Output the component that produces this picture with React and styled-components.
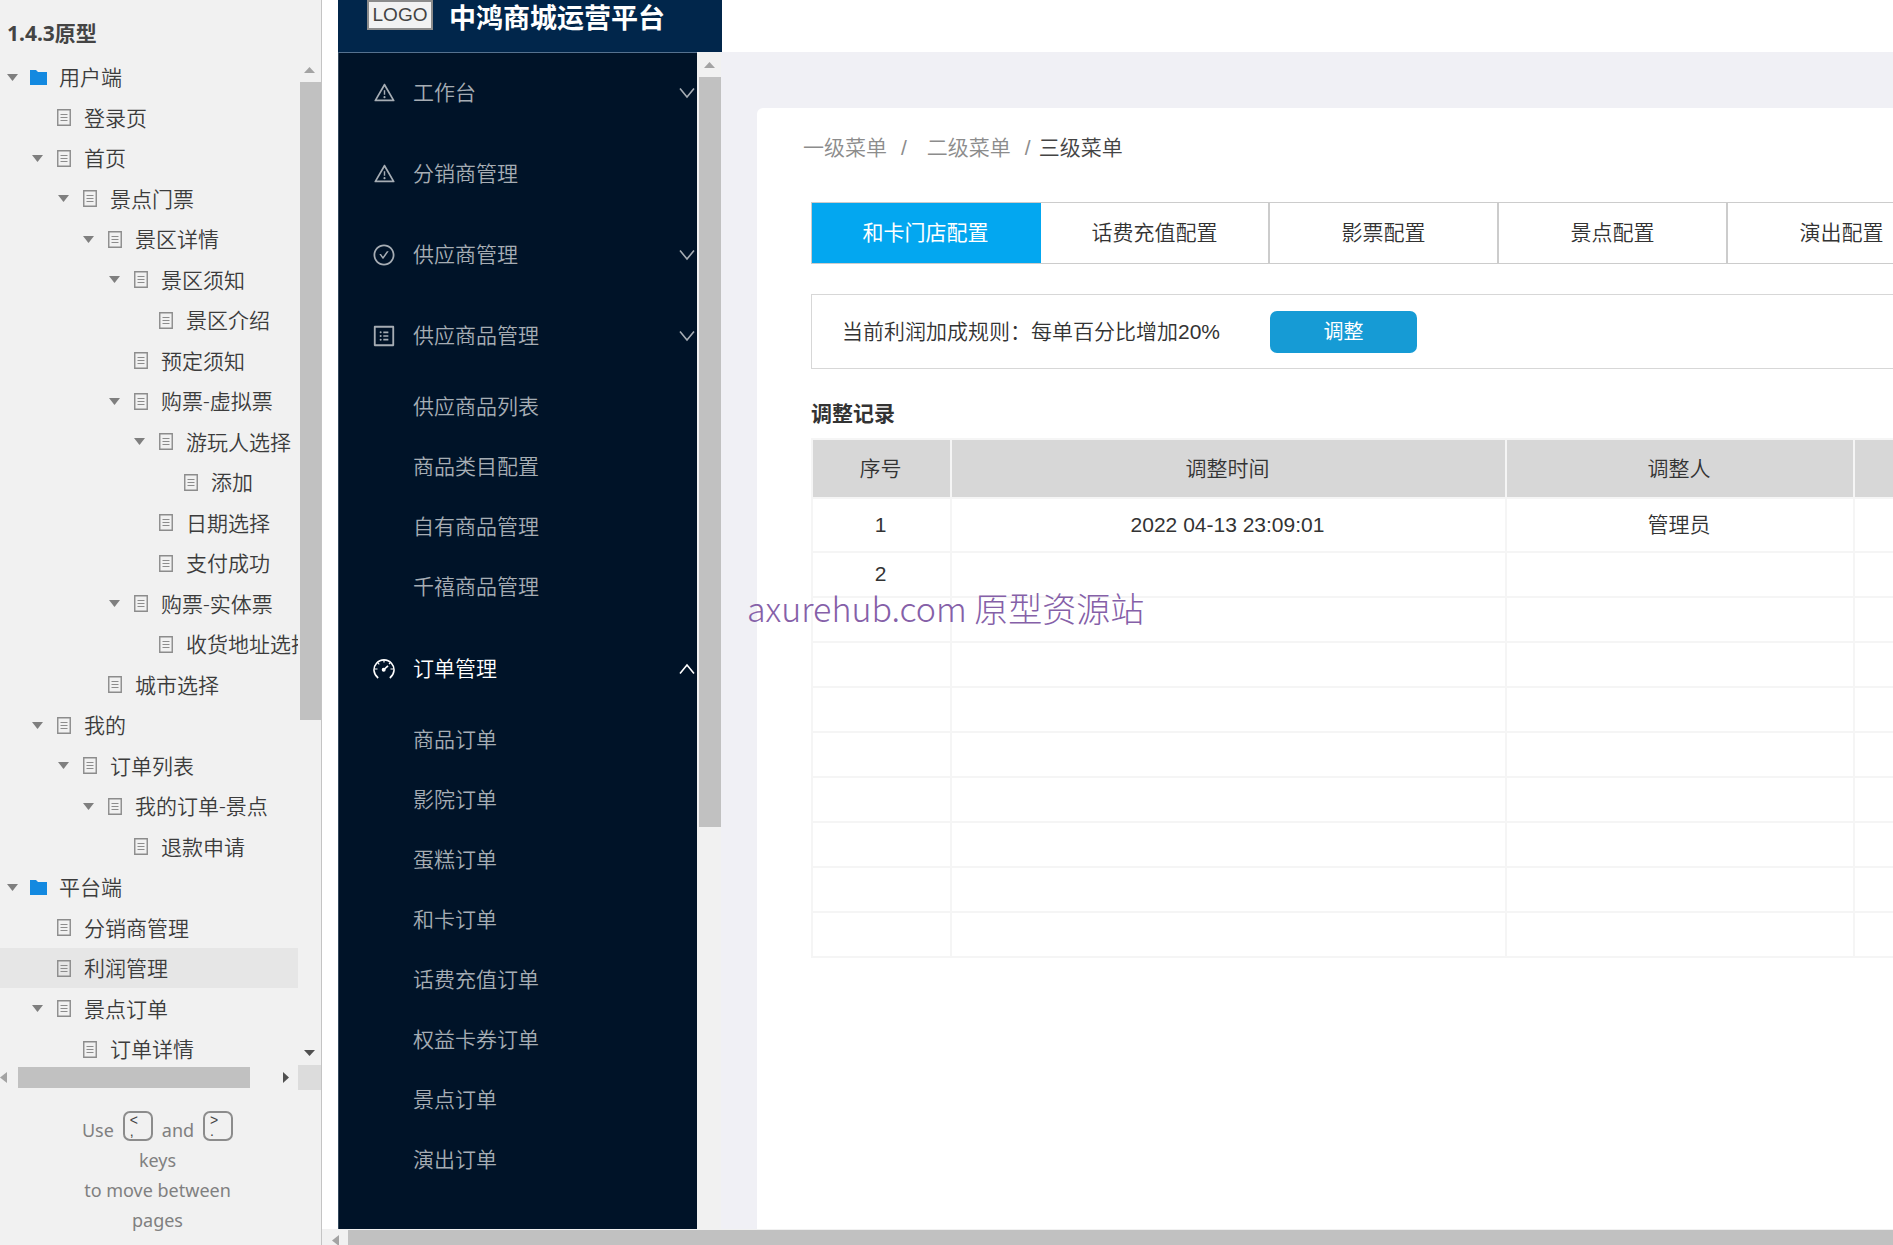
import React from "react";
import styled, { createGlobalStyle, css } from "styled-components";
import { AiOutlineWarning, AiOutlineCheckCircle, AiOutlineProfile } from "react-icons/ai";

const GlobalStyle = createGlobalStyle`
  *, *::before, *::after { box-sizing: border-box; }
  body {
    margin: 0;
    overflow: hidden;
    background: #fff;
    font-family: "Liberation Sans", "Noto Sans CJK SC", sans-serif;
    font-size: 21px;
    line-height: 30px;
    color: #333;
  }
  button { font: inherit; border: 0; padding: 0; cursor: pointer; background: none; color: inherit; }
  a { color: inherit; text-decoration: none; }
  h1, h2, p, ul { margin: 0; padding: 0; list-style: none; }
`;

const cjkLight = css`
  font-family: "Liberation Sans", "Noto Sans CJK SC", sans-serif;
  font-weight: 350;
`;

/* ---------- shell ---------- */

const Page = styled.div`
  display: flex;
  height: 100vh;
  overflow: hidden;
`;

const Sidebar = styled.aside`
  display: flex;
  flex-direction: column;
  flex: none;
  width: 322px;
  background: #f1f1f1;
  border-right: 1px solid #c4c4c4;
  font-family: "Noto Sans", "Noto Sans CJK SC", sans-serif;
`;

const ProjectTitle = styled.h1`
  flex: none;
  height: 57px;
  padding: 18px 7px 0;
  font-size: 21px;
  line-height: 30px;
  font-weight: 700;
  color: #444;
`;

const TreeArea = styled.div`
  display: grid;
  grid-template-columns: minmax(0, 1fr) 23px;
  grid-template-rows: minmax(0, 1fr) 25px;
  flex: 1;
  min-height: 0;
`;

const Tree = styled.ul`
  overflow: hidden;
`;

const TreeRow = styled.li`
  height: 40px;
  background: ${(p) => (p.$selected ? "#e6e6e6" : "transparent")};
  &:nth-child(even) { height: 41px; }
`;

const TreeLink = styled.a`
  display: flex;
  align-items: center;
  height: 100%;
  white-space: nowrap;
  font-weight: 350;
  color: #3c3c3c;
`;

const ArrowSlot = styled.span`
  display: flex;
  flex: none;
  width: 11px;
  margin-right: 12px;
`;

const IconSlot = styled.span`
  display: flex;
  flex: none;
  justify-content: center;
  width: 17px;
  margin-right: 12px;
`;

/* ---------- scroll bars ---------- */

const VTrack = styled.div`
  display: flex;
  flex-direction: column;
  align-items: center;
  flex: none;
  width: ${(p) => p.$width};
  background: #f1f1f1;
`;

const VThumb = styled.div`
  width: 100%;
  flex: 0 1 ${(p) => p.$size};
  background: #c1c1c1;
  border-left: 2px solid #f1f1f1;
`;

const VEnd = styled.div`
  display: flex;
  align-items: center;
  justify-content: center;
  flex: none;
  height: 25px;
  margin-top: ${(p) => (p.$last ? "auto" : "0")};
`;

const HTrack = styled.div`
  display: flex;
  align-items: center;
  background: #f1f1f1;
`;

const FrameScroll = styled(HTrack)`
  align-items: flex-start;
  flex: none;
  height: 16px;
  padding-top: 1px;
  overflow: hidden;
`;

const HEnd = styled.div`
  display: flex;
  align-items: center;
  justify-content: ${(p) => p.$align || "center"};
  flex: none;
  width: ${(p) => p.$width};
  height: 21px;
  margin-left: ${(p) => (p.$last ? "auto" : "0")};
`;

const HThumb = styled.div`
  flex: ${(p) => p.$flex};
  height: 21px;
  background: #c1c1c1;
`;

const Corner = styled.div`
  background: #dcdcdc;
`;

/* ---------- shortcuts hint ---------- */

const Hint = styled.footer`
  flex: none;
  height: 155px;
  padding: 21px 78px 0 72px;
  text-align: center;
  font-size: 18px;
  line-height: 30px;
  color: #808080;
`;

const HintLine = styled.p`
  display: flex;
  align-items: flex-end;
  justify-content: center;
  gap: 9px;
  height: 34px;
  white-space: nowrap;
`;

const Key = styled.kbd`
  display: flex;
  flex-direction: column;
  width: 30px;
  height: 30px;
  margin-bottom: 4px;
  padding-left: 5px;
  border: 2px solid #8c8c8c;
  border-radius: 7px;
  font-family: "Liberation Sans", sans-serif;
  font-size: 14px;
  line-height: 15px;
  text-align: left;
  color: #444;

  span:last-child { line-height: 7px; }
`;

/* ---------- preview frame ---------- */

const Frame = styled.div`
  display: flex;
  flex-direction: column;
  flex: 1;
  min-width: 0;
`;

const TopBar = styled.header`
  flex: none;
  padding-left: 16px;
`;

const Brand = styled.div`
  display: flex;
  align-items: flex-start;
  width: 384px;
  height: 52px;
  padding-left: 29px;
  gap: 16px;
  background: #01264b;
`;

const Logo = styled.div`
  width: 66px;
  height: 30px;
  border: 2px solid #8b8b8b;
  background: #f2f2f2;
  text-align: center;
  font-size: 19px;
  line-height: 25px;
  color: #444;
`;

const BrandName = styled.h2`
  font-size: 27px;
  line-height: 38px;
  font-weight: 700;
  color: #fff;
`;

const Body = styled.div`
  display: flex;
  flex: 1;
  min-height: 0;
  padding-left: 16px;
`;

const Menu = styled.nav`
  flex: none;
  width: 359px;
  overflow: hidden;
  background: #001328;
  border-left: 1px solid #33485c;
  border-top: 1px solid #56728f;
`;

const MenuButton = styled.button`
  display: flex;
  align-items: center;
  width: 100%;
  height: 81px;
  padding: 0 2px 2px 31px;
  ${cjkLight}
  color: ${(p) => (p.$open ? "#fff" : "#a6adb4")};
`;

const MenuIcon = styled.span`
  display: flex;
  justify-content: center;
  flex: none;
  width: 28px;
  margin-right: 15px;
`;

const MenuLabel = styled.span`
  flex: 1;
  text-align: left;
`;

const SubMenu = styled.ul`
  padding-bottom: 12px;
`;

const SubLink = styled.a`
  display: flex;
  align-items: center;
  height: 60px;
  padding-left: 74px;
  ${cjkLight}
  color: #a6adb4;
`;

const Main = styled.main`
  display: flex;
  flex: 1;
  min-width: 0;
  padding: 56px 0 0 36px;
  background: #f0f0f5;
`;

const Card = styled.section`
  flex: 1;
  min-width: 0;
  overflow: hidden;
  padding: 25px 0 0 54px;
  background: #fff;
  border-radius: 6px 0 0 0;
  ${cjkLight}
`;

const Crumbs = styled.nav`
  display: flex;
  margin-left: -8px;
  color: #8c8c8c;
`;

const Slash = styled.span`
  margin: 0 ${(p) => (p.$tight ? "8px" : "20px")} 0 14px;
`;

const Crumb = styled.a`
  color: ${(p) => (p.$current ? "#444" : "inherit")};
`;

const Tabs = styled.div`
  display: flex;
  margin-top: 39px;
  border: 1px solid #ccc;
  border-right: 0;
  overflow: hidden;
`;

const Tab = styled.button`
  flex: none;
  width: 229px;
  height: 60px;
  border-right: 2px solid ${(p) => (p.$active ? "#03a7f0" : "#ccc")};
  background: ${(p) => (p.$active ? "#03a7f0" : "#fff")};
  color: ${(p) => (p.$active ? "#fff" : "#333")};
  font-weight: ${(p) => (p.$active ? 400 : 350)};
`;

const Rule = styled.div`
  display: flex;
  align-items: center;
  gap: 50px;
  height: 75px;
  margin-top: 30px;
  padding-left: 30px;
  border: 1px solid #d7d7d7;
  border-right: 0;
`;

const AdjustButton = styled.button`
  width: 147px;
  height: 42px;
  border-radius: 7px;
  background: #169bd5;
  font-size: 20px;
  font-weight: 400;
  color: #fff;
`;

const SectionTitle = styled.h2`
  margin-top: 30px;
  font-size: 21px;
  line-height: 30px;
  font-weight: 700;
`;

const Records = styled.table`
  width: 1500px;
  margin-top: 9px;
  border-collapse: collapse;
  table-layout: fixed;
  text-align: center;

  th, td {
    padding: 0 2px 2px 0;
    height: 45px;
    border: 2px solid #f5f5f5;
    font-weight: 350;
  }
  th { height: 59px; padding-bottom: 0; background: #d7d7d7; }
  tbody tr:first-child td { height: 54px; padding-bottom: 0; }
`;

const Col = styled.col`
  width: ${(p) => p.$width};
`;

const Watermark = styled.div`
  position: absolute;
  left: 747px;
  top: 585px;
  pointer-events: none;
  white-space: nowrap;
  font-family: "Noto Sans CJK SC", sans-serif;
  font-size: 34px;
  line-height: 46px;
  font-weight: 300;
  color: #8560a8;
`;

/* ---------- drawings ---------- */

const Triangle = ({ dir = "down", color = "#7f7f7f", w = 11, h = 7 }) => {
  const d = {
    down: `M0 0H${w}L${w / 2} ${h}Z`,
    up: `M0 ${h}H${w}L${w / 2} 0Z`,
    left: `M${w} 0V${h}L0 ${h / 2}Z`,
    right: `M0 0V${h}L${w} ${h / 2}Z`,
  }[dir];
  return (
    <svg width={w} height={h} aria-hidden="true">
      <path d={d} fill={color} />
    </svg>
  );
};

const Folder = () => (
  <svg width="17" height="15" viewBox="0 0 17 15" aria-hidden="true">
    <path d="M0 0H6L8 2H17V15H0Z" fill="#1389e0" />
  </svg>
);

const PageIcon = () => (
  <svg width="14" height="17" viewBox="0 0 14 17" fill="none" stroke="#8c8c8c" aria-hidden="true">
    <path d="M.75 .75H13.25V16.25H.75Z" strokeWidth="1.4" />
    <path d="M3.5 5.5H10.5M3.5 8.5H10.5M3.5 11.5H10.5" />
  </svg>
);

const Chevron = ({ up }) => (
  <svg width="16" height="12" viewBox="0 0 16 12" fill="none" stroke="currentColor" strokeWidth="1.6" aria-hidden="true">
    <path d={up ? "M1 10.5L8 2L15 10.5" : "M1 1.5L8 10L15 1.5"} />
  </svg>
);

const Gauge = () => (
  <svg width="22" height="22" viewBox="0 0 22 22" fill="none" stroke="currentColor" strokeWidth="1.6" aria-hidden="true">
    <path d="M5.2 20A10 10 0 1 1 16.8 20" />
    <path d="M11 2V4.5M4.6 4.6L6.3 6.3M2 11H4.5M20 11H17.5M17.4 4.6L16 6" strokeWidth="1.2" />
    <path d="M11 11.5L15 7.8" />
    <circle cx="10.7" cy="11.8" r="1.2" fill="currentColor" />
  </svg>
);

/* ---------- data ---------- */

const tree = [
  [0, "用户端", true],
  [1, "登录页"],
  [1, "首页", true],
  [2, "景点门票", true],
  [3, "景区详情", true],
  [4, "景区须知", true],
  [5, "景区介绍"],
  [4, "预定须知"],
  [4, "购票-虚拟票", true],
  [5, "游玩人选择", true],
  [6, "添加"],
  [5, "日期选择"],
  [5, "支付成功"],
  [4, "购票-实体票", true],
  [5, "收货地址选择"],
  [3, "城市选择"],
  [1, "我的", true],
  [2, "订单列表", true],
  [3, "我的订单-景点", true],
  [4, "退款申请"],
  [0, "平台端", true],
  [1, "分销商管理"],
  [1, "利润管理"],
  [1, "景点订单", true],
  [2, "订单详情"],
];

const menu = [
  { label: "工作台", icon: <AiOutlineWarning size={23} />, arrow: true },
  { label: "分销商管理", icon: <AiOutlineWarning size={23} /> },
  { label: "供应商管理", icon: <AiOutlineCheckCircle size={24} />, arrow: true },
  {
    label: "供应商品管理",
    icon: <AiOutlineProfile size={26} />,
    arrow: true,
    items: ["供应商品列表", "商品类目配置", "自有商品管理", "千禧商品管理"],
  },
  {
    label: "订单管理",
    icon: <Gauge />,
    arrow: true,
    open: true,
    items: ["商品订单", "影院订单", "蛋糕订单", "和卡订单", "话费充值订单", "权益卡券订单", "景点订单", "演出订单"],
  },
];

const tabs = ["和卡门店配置", "话费充值配置", "影票配置", "景点配置", "演出配置"];

const records = [
  ["1", "2022 04-13 23:09:01", "管理员"],
  ["2", "", ""],
  ...Array.from({ length: 8 }, () => ["", "", ""]),
];

const indentOf = (level) => Math.round(level * 25.4) + 7;

export default function App() {
  return (
    <Page>
      <GlobalStyle />
      <Sidebar>
        <ProjectTitle>1.4.3原型</ProjectTitle>
        <TreeArea>
          <Tree>
            {tree.map(([level, name, open], i) => (
              <TreeRow key={i} $selected={name === "利润管理"}>
                <TreeLink href="#" style={{ paddingLeft: indentOf(level) }}>
                  <ArrowSlot>{open && <Triangle />}</ArrowSlot>
                  <IconSlot>{level === 0 ? <Folder /> : <PageIcon />}</IconSlot>
                  {name}
                </TreeLink>
              </TreeRow>
            ))}
          </Tree>
          <VTrack $width="23px">
            <VEnd><Triangle dir="up" color="#a3a3a3" h={6} /></VEnd>
            <VThumb $size="638px" />
            <VEnd $last><Triangle color="#505050" h={6} /></VEnd>
          </VTrack>
          <HTrack>
            <HEnd $width="18px" $align="flex-start"><Triangle dir="left" color="#a3a3a3" w={7} h={11} /></HEnd>
            <HThumb $flex="0 0 232px" />
            <HEnd $width="24px" $last><Triangle dir="right" color="#505050" w={6} h={11} /></HEnd>
          </HTrack>
          <Corner />
        </TreeArea>
        <Hint>
          <HintLine>
            Use <Key><span>&lt;</span><span>,</span></Key> and <Key><span>&gt;</span><span>.</span></Key>
          </HintLine>
          <p>keys</p>
          <p>to move between</p>
          <p>pages</p>
        </Hint>
      </Sidebar>

      <Frame>
        <TopBar>
          <Brand>
            <Logo>LOGO</Logo>
            <BrandName>中鸿商城运营平台</BrandName>
          </Brand>
        </TopBar>
        <Body>
          <Menu>
            {menu.map((m) => (
              <React.Fragment key={m.label}>
                <MenuButton type="button" $open={m.open}>
                  <MenuIcon>{m.icon}</MenuIcon>
                  <MenuLabel>{m.label}</MenuLabel>
                  {m.arrow && <Chevron up={m.open} />}
                </MenuButton>
                {m.items && (
                  <SubMenu>
                    {m.items.map((s) => (
                      <li key={s}><SubLink href="#">{s}</SubLink></li>
                    ))}
                  </SubMenu>
                )}
              </React.Fragment>
            ))}
          </Menu>
          <VTrack $width="24px">
            <VEnd><Triangle dir="up" color="#a3a3a3" h={6} /></VEnd>
            <VThumb $size="750px" />
          </VTrack>
          <Main>
            <Card>
              <Crumbs>
                <Crumb href="#">一级菜单</Crumb>
                <Slash>/</Slash>
                <Crumb href="#">二级菜单</Crumb>
                <Slash $tight>/</Slash>
                <Crumb href="#" $current>三级菜单</Crumb>
              </Crumbs>
              <Tabs>
                {tabs.map((t, i) => (
                  <Tab key={t} type="button" $active={i === 0}>{t}</Tab>
                ))}
              </Tabs>
              <Rule>
                <span>当前利润加成规则：每单百分比增加20%</span>
                <AdjustButton type="button">调整</AdjustButton>
              </Rule>
              <SectionTitle>调整记录</SectionTitle>
              <Records>
                <colgroup>
                  <Col $width="139px" />
                  <Col $width="555px" />
                  <Col $width="348px" />
                  <Col />
                </colgroup>
                <thead>
                  <tr>
                    <th>序号</th>
                    <th>调整时间</th>
                    <th>调整人</th>
                    <th />
                  </tr>
                </thead>
                <tbody>
                  {records.map((r, i) => (
                    <tr key={i}>
                      {r.map((c, j) => <td key={j}>{c}</td>)}
                      <td />
                    </tr>
                  ))}
                </tbody>
              </Records>
            </Card>
          </Main>
        </Body>
        <FrameScroll>
          <HEnd $width="26px"><Triangle dir="left" color="#a3a3a3" w={7} h={11} /></HEnd>
          <HThumb $flex="1" />
        </FrameScroll>
      </Frame>
      <Watermark>axurehub.com 原型资源站</Watermark>
    </Page>
  );
}
